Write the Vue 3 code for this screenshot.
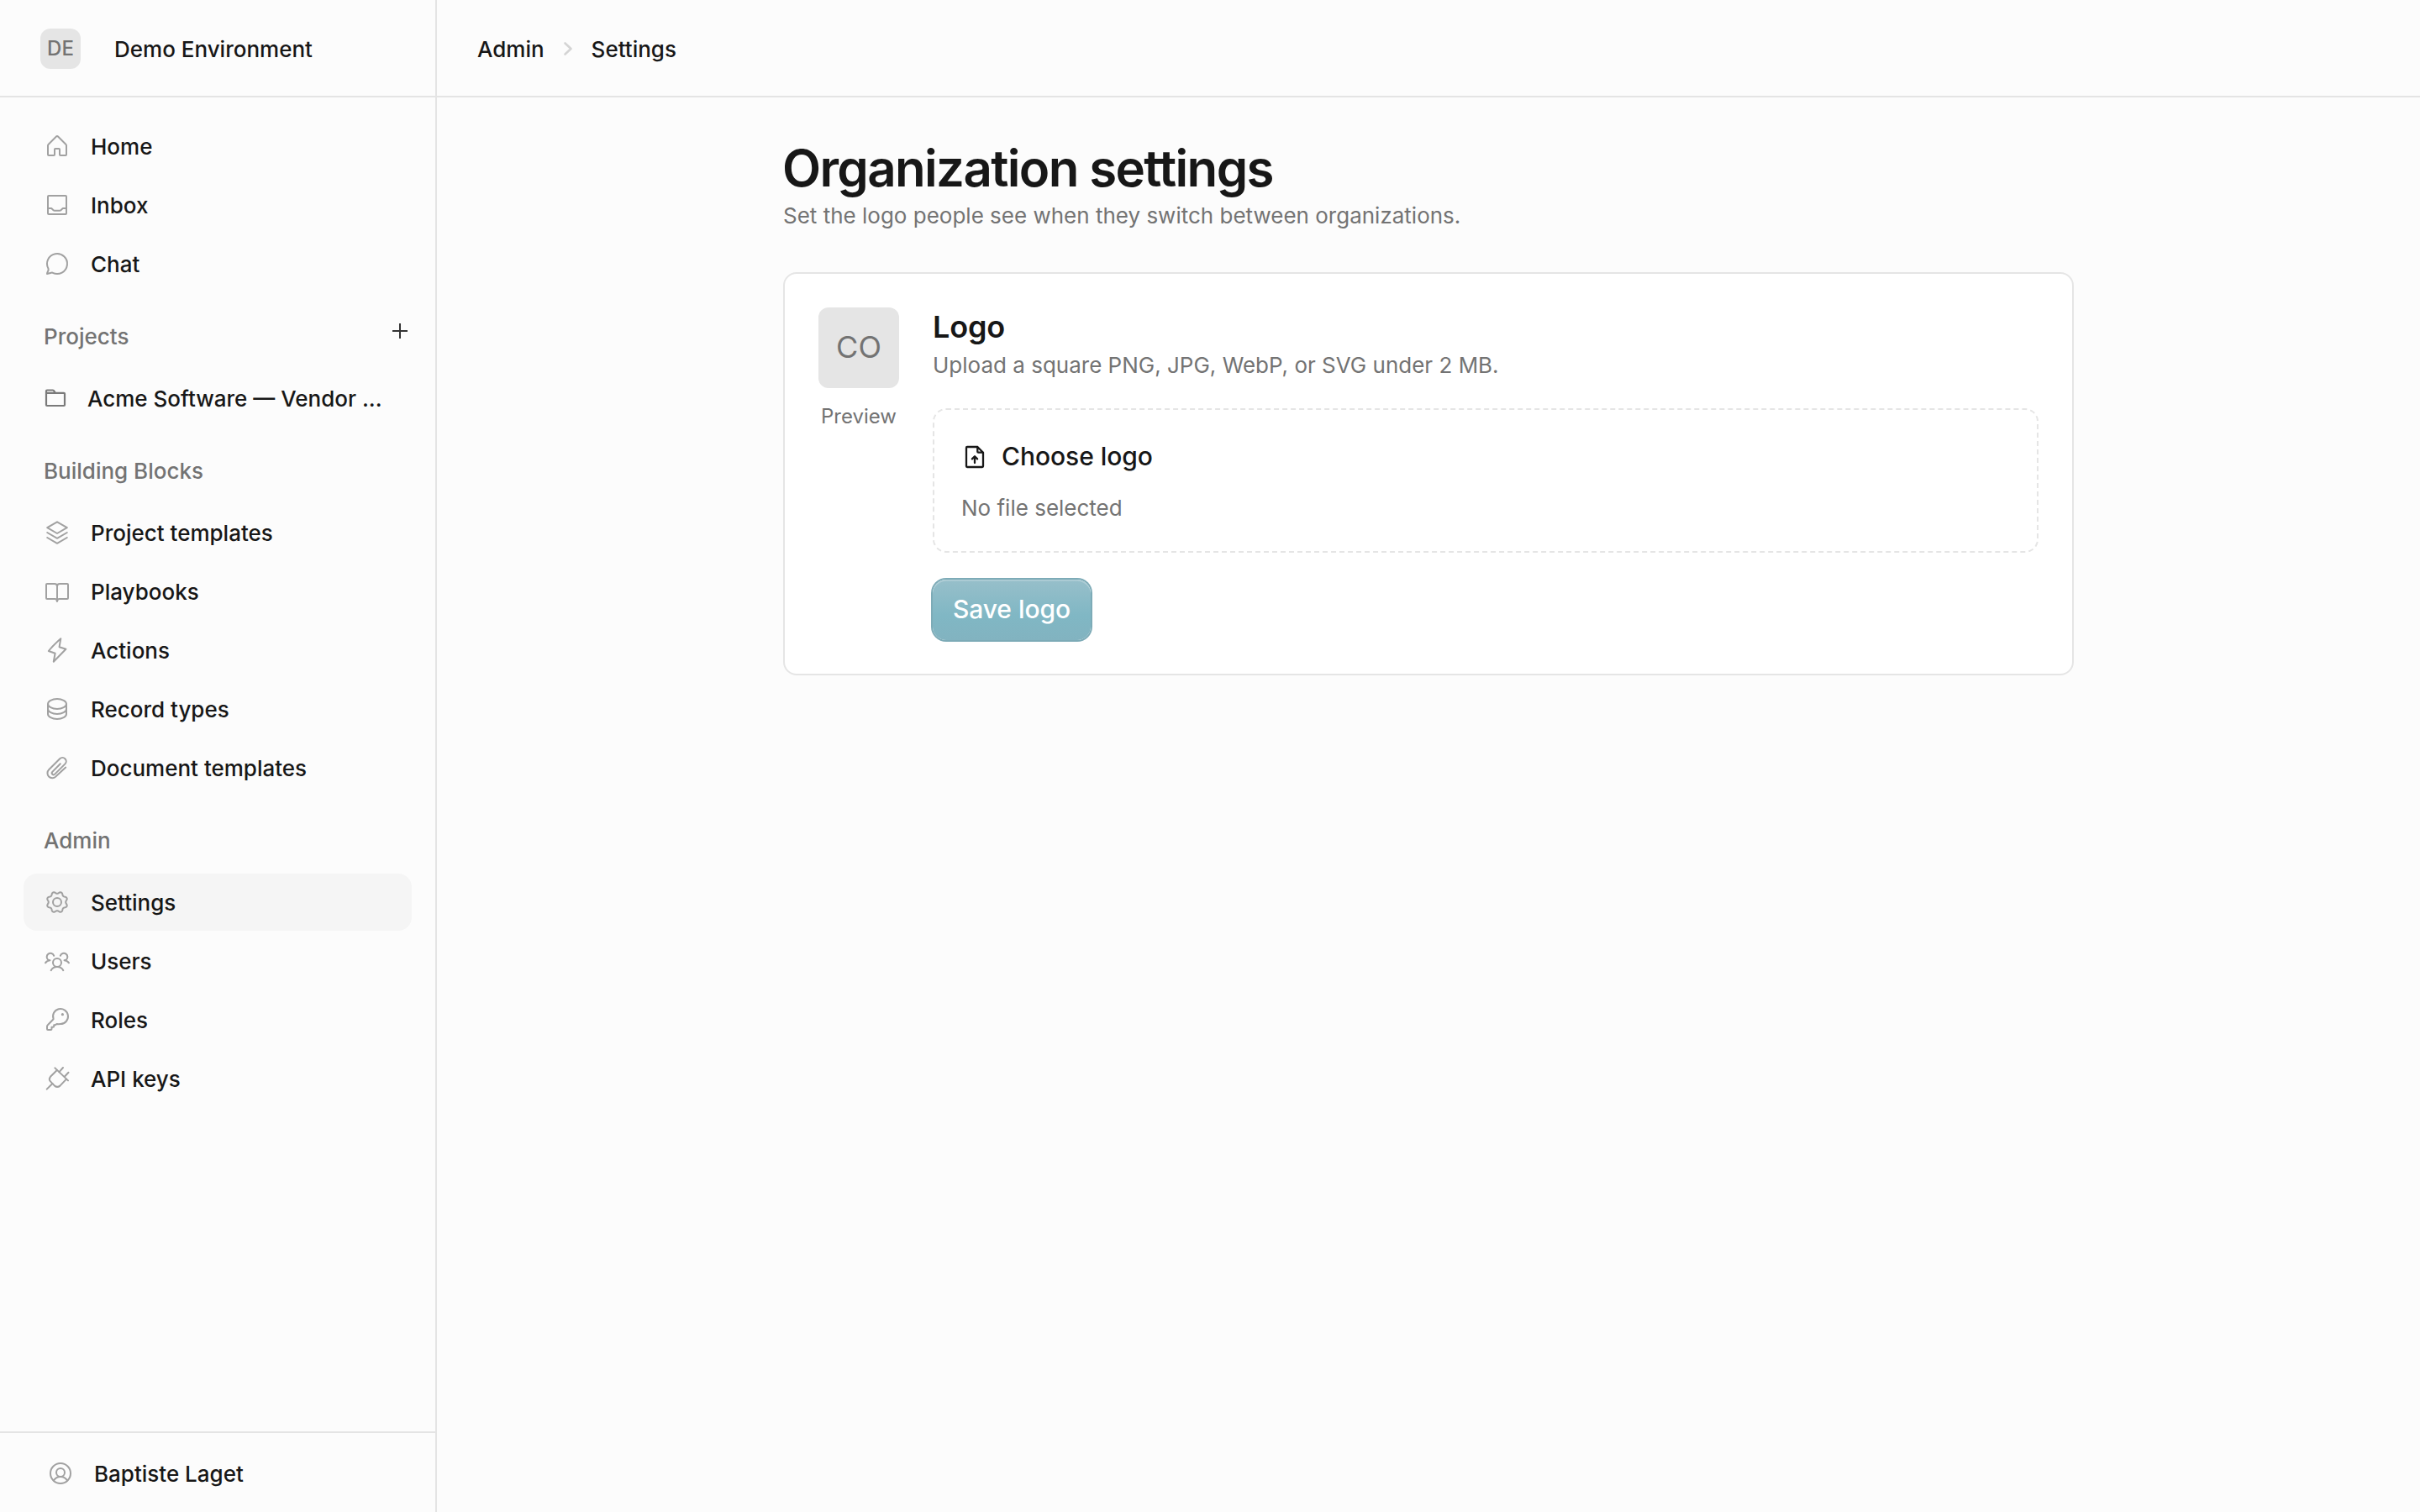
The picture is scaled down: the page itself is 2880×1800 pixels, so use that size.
<script setup>
// Gear outline: eight soft lobes around the hub
const gear = (() => {
  const pts = []
  for (let i = 0; i < 128; i++) {
    const a = (i / 128) * Math.PI * 2
    const c = Math.cos(8 * a)
    const r = 11.35 - 1.15 * Math.sign(c) * Math.pow(Math.abs(c), 0.8)
    pts.push((16 + r * Math.cos(a)).toFixed(2) + ' ' + (16 + r * Math.sin(a)).toFixed(2))
  }
  return 'M' + pts.join('L') + 'Z'
})()

const icons = {
  home: ['M6 27a1 1 0 0 1-1-1V15.2a1.6 1.6 0 0 1 .5-1.2L15 4.5a1.4 1.4 0 0 1 2 0L26.500 14a1.600 1.600 0 0 1 .5 1.200V26a1 1 0 0 1-1 1h-6a1 1 0 0 1-1-1v-6.200a.8.8 0 0 0-.8-.8h-4.400a.8.8 0 0 0-.8.8V26a1 1 0 0 1-1 1z'],
  inbox: ['M6 5h20a1 1 0 0 1 1 1v20a1 1 0 0 1-1 1H6a1 1 0 0 1-1-1V6a1 1 0 0 1 1-1z', 'M5 20h4.200l2.400 2.200a2 2 0 0 0 1.300.5h6.200a2 2 0 0 0 1.300-.5L22.800 20H27'],
  chat: ['M5.500 21.800A12 12 0 1 1 10.800 26.800Q10 26.500 9 26.700L4 28Q4 27 5 25Q6 23.500 5.500 21.800z'],
  layers: ['M16 3.300L27.800 10.200L16 17L4.200 10.200z', 'M4.200 16L16 22.800L27.800 16', 'M4.200 22L16 28.800L27.800 22'],
  book: ['M16 9.500Q15.600 7 13 7H4a1 1 0 0 0-1 1v16a1 1 0 0 0 1 1h9.500Q15.600 25 16 28Q16.400 25 18.500 25H28a1 1 0 0 0 1-1V8a1 1 0 0 0-1-1h-9Q16.400 7 16 9.500V28'],
  bolt: ['M20.300 2.200L18.600 12.200L26.400 14.800L11.800 29.800L13.600 19.800L5.800 17Q11 10.500 20.300 2.200z'],
  database: ['M5 10A11 6 0 0 1 27 10A11 6 0 0 1 5 10V22A11 6 0 0 0 27 22V10', 'M5 16A11 6 0 0 0 27 16'],
  clip: ['M26.200 15.600L14.300 26.600A5.700 5.700 0 0 1 6.200 18.300L19.200 5.300A4.300 4.300 0 0 1 25.500 11.400L13.200 23.600A1.900 1.900 0 0 1 10.300 20.900L19.800 11.200'],
  gear: [gear, 'M21 16A5 5 0 1 1 11 16A5 5 0 1 1 21 16z'],
  users: ['M21 18A5 5 0 1 1 11 18A5 5 0 1 1 21 18z', 'M8.700 27.200C10 24.600 12.600 23 16 23S22 24.600 23.300 27.200', 'M12.200 9.800A4.400 4.400 0 1 0 5.300 14.700L7.500 15.300Q4 15.500 2 18.300', 'M19.800 9.800A4.400 4.400 0 1 1 26.700 14.700L24.500 15.300Q28 15.500 30 18.300'],
  key: ['M11.600 15.200L4.800 22.200A2.200 2.200 0 0 0 4 24V27a1 1 0 0 0 1 1h3.500a1 1 0 0 0 1-1v-2.200h1.700a1 1 0 0 0 1-1V22.200h1.600L15.600 21Q17.500 21.300 20 21A9 9 0 1 0 11.600 15.200z'],
  plug: ['M13.400 3.400L29 18.400', 'M15.800 6L8 13.800Q5.600 16.600 8 19.400L13 24.600Q16.200 27.200 19.400 24.600L27 16.600', 'M10.400 22L3.700 28.600', 'M18.500 8.200L23 3', 'M24.800 13.800L29.500 8.700'],
  account: ['M28 16A12 12 0 1 1 4 16A12 12 0 1 1 28 16z', 'M21 15A5 5 0 1 1 11 15A5 5 0 1 1 21 15z', 'M8 24.400C9.800 21.600 12.600 20 16 20S22.200 21.600 24 24.400'],
}

const main = [
  { icon: 'home', label: 'Home' },
  { icon: 'inbox', label: 'Inbox' },
  { icon: 'chat', label: 'Chat' },
]
const blocks = [
  { icon: 'layers', label: 'Project templates' },
  { icon: 'book', label: 'Playbooks' },
  { icon: 'bolt', label: 'Actions' },
  { icon: 'database', label: 'Record types' },
  { icon: 'clip', label: 'Document templates' },
]
const admin = [
  { icon: 'gear', label: 'Settings', active: true },
  { icon: 'users', label: 'Users' },
  { icon: 'key', label: 'Roles' },
  { icon: 'plug', label: 'API keys' },
]
const groups = [
  { items: main },
  { title: 'Projects', project: true, items: [] },
  { title: 'Building Blocks', items: blocks },
  { title: 'Admin', items: admin },
]
</script>

<template>
  <div class="app">
    <aside class="sidebar">
      <header class="org">
        <span class="avatar">DE</span>
        <span class="label">Demo Environment</span>
      </header>

      <nav class="nav">
        <section v-for="(g, gi) in groups" :key="gi" class="group">
          <div v-if="g.title" class="group-head">
            <span class="group-title">{{ g.title }}</span>
            <svg v-if="g.project" class="plus" viewBox="0 0 20 20"><path d="M10 1v18M1 10h18" /></svg>
          </div>
          <a v-if="g.project" class="item project">
            <svg class="icon dark" viewBox="0 0 32 32">
              <path d="M6 9.800H26a1 1 0 0 1 1 1V24a1 1 0 0 1-1 1H6a1 1 0 0 1-1-1V7.500a1 1 0 0 1 1-1h6.500a2 2 0 0 1 1.500.6L16 9.800M5 9.800H7" />
            </svg>
            <span class="label">Acme Software — Vendor ...</span>
          </a>
          <a v-for="it in g.items" :key="it.label" class="item" :class="{ active: it.active }">
            <svg class="icon" viewBox="0 0 32 32">
              <path v-for="(d, i) in icons[it.icon]" :key="i" :d="d" />
              <circle v-if="it.icon === 'key'" class="dot" cx="22.400" cy="9.700" r="1.600" />
            </svg>
            <span class="label">{{ it.label }}</span>
          </a>
        </section>
      </nav>

      <footer class="account">
        <svg class="icon" viewBox="0 0 32 32"><path v-for="(d, i) in icons.account" :key="i" :d="d" /></svg>
        <span class="label">Baptiste Laget</span>
      </footer>
    </aside>

    <div class="page">
      <header class="crumbs">
        <span class="label">Admin</span>
        <svg class="chevron" viewBox="0 0 16 20"><path d="M4.500 3.500L11.500 10L4.500 16.500" /></svg>
        <span class="label">Settings</span>
      </header>

      <main class="content">
        <h1 class="title">Organization settings</h1>
        <p class="muted">Set the logo people see when they switch between organizations.</p>

        <section class="card">
          <div class="preview">
            <div class="preview-box"><span>CO</span></div>
            <div class="preview-label">Preview</div>
          </div>
          <div class="form">
            <h2 class="subtitle">Logo</h2>
            <p class="muted">Upload a square PNG, JPG, WebP, or SVG under 2 MB.</p>
            <div class="dropzone">
              <div class="choose">
                <svg class="file" viewBox="0 0 32 32">
                  <path d="M19.300 4H7a1 1 0 0 0-1 1v22a1 1 0 0 0 1 1h18a1 1 0 0 0 1-1V10.700zV9.700a1 1 0 0 0 1 1H26M16 23V15.600M12.900 18.400L16 15.300L19.100 18.400" />
                </svg>
                <span class="choose-label">Choose logo</span>
              </div>
              <p class="muted">No file selected</p>
            </div>
            <button class="save"><span>Save logo</span></button>
          </div>
        </section>
      </main>
    </div>
  </div>
</template>

<style>
body { margin: 0; background: #fcfcfc; }
</style>

<style scoped>
.app {
  display: flex;
  height: 1800px;
  background: #fcfcfc;
  color: #171717;
  font-family: Inter, sans-serif;
  font-size: 26px;
  font-weight: 500;
  line-height: 40px;
  overflow: hidden;
}
h1, h2, p { margin: 0; }
.sidebar {
  box-sizing: border-box;
  width: 520px;
  flex: none;
  display: flex;
  flex-direction: column;
  border-right: 2px solid #e4e4e4;
}
.org {
  box-sizing: border-box;
  height: 116px;
  padding: 2px 0 0 48px;
  display: flex;
  align-items: center;
  gap: 40px;
  border-bottom: 2px solid #e4e4e4;
}
.avatar {
  width: 48px;
  height: 48px;
  border-radius: 12px;
  background: #e5e5e5;
  color: #737373;
  font-size: 24px;
  line-height: 48px;
  text-align: center;
}
.nav { flex: 1; padding: 24px 28px 0; }
.group { display: flex; flex-direction: column; gap: 2px; }
.group-head {
  height: 90px;
  padding: 0 14px 0 24px;
  display: flex;
  justify-content: space-between;
  align-items: center;
  color: #737373;
}
.group-title { padding-top: 15px; }
.plus {
  width: 20px;
  height: 20px;
  margin: 1px -10px 0 0;
  fill: none;
  stroke: #333;
  stroke-width: 2;
}
.item {
  height: 68px;
  padding: 0 24px;
  display: flex;
  align-items: center;
  gap: 24px;
  border-radius: 16px;
}
.item.active { background: #f5f5f5; }
.item.project { padding-left: 22px; gap: 22px; }
.label { padding-top: 2px; white-space: nowrap; }
.icon {
  width: 32px;
  height: 32px;
  flex: none;
  fill: none;
  stroke: #a1a1a1;
  stroke-width: 2;
  stroke-linecap: round;
  stroke-linejoin: round;
}
.icon.dark { stroke: #7a7a7a; stroke-width: 2.2; }
.dot { fill: #a1a1a1; stroke: none; }
.account {
  box-sizing: border-box;
  height: 96px;
  padding: 2px 0 0 56px;
  display: flex;
  align-items: center;
  gap: 24px;
  border-top: 2px solid #e4e4e4;
}
.page { flex: 1; }
.crumbs {
  box-sizing: border-box;
  height: 116px;
  padding: 2px 0 0 48px;
  display: flex;
  align-items: center;
  border-bottom: 2px solid #e4e4e4;
}
.chevron {
  width: 16px;
  height: 20px;
  margin: 0 20px;
  fill: none;
  stroke: #d4d4d4;
  stroke-width: 2.6;
  stroke-linecap: round;
  stroke-linejoin: round;
}
.content { width: 1536px; margin: 0 auto; padding-top: 48px; }
.title {
  margin-left: -1px;
  font-size: 60px;
  font-weight: 600;
  line-height: 73px;
  letter-spacing: -1.65px;
}
.muted { color: #737373; font-weight: 400; }
.card {
  box-sizing: border-box;
  margin-top: 47px;
  padding: 40px;
  display: flex;
  gap: 40px;
  background: #fff;
  border: 2px solid #e5e5e5;
  border-radius: 16px;
}
.preview {
  width: 96px;
  flex: none;
  display: flex;
  flex-direction: column;
  gap: 17px;
  text-align: center;
  color: #737373;
  font-weight: 400;
}
.preview-box {
  height: 96px;
  border-radius: 12px;
  background: #e5e5e5;
  font-size: 36px;
  line-height: 94px;
}
.preview-label { font-size: 24px; line-height: 34px; }
.form { flex: 1; display: flex; flex-direction: column; align-items: flex-start; }
.subtitle { font-size: 36px; font-weight: 600; line-height: 47px; padding-bottom: 2px; letter-spacing: -0.2px; }
.dropzone {
  box-sizing: border-box;
  width: 100%;
  height: 172px;
  margin-top: 31px;
  padding: 24px 32px;
  display: flex;
  flex-direction: column;
  gap: 9px;
  border: 2px dashed #e5e5e5;
  border-radius: 16px;
}
.choose { height: 64px; display: flex; align-items: center; gap: 16px; font-size: 30px; }
.choose-label { padding-bottom: 2px; letter-spacing: -0.05px; }
.file {
  width: 32px;
  height: 32px;
  fill: none;
  stroke: #171717;
  stroke-width: 2.3;
  stroke-linecap: round;
  stroke-linejoin: round;
}
.save {
  width: 188px;
  height: 72px;
  margin: 32px 0 0;
  padding: 0 0 2px;
  border: 0;
  border-radius: 16px;
  background: linear-gradient(180deg, #97bfca 0%, #80b7c4 60%, #82b3c0 100%);
  box-shadow: 0 0 0 2px #7dabb7, inset 0 2px 0 rgba(255, 255, 255, 0.2);
  color: #fff;
  font: 500 30px/40px Inter, sans-serif;
  letter-spacing: -0.05px;
}
</style>
